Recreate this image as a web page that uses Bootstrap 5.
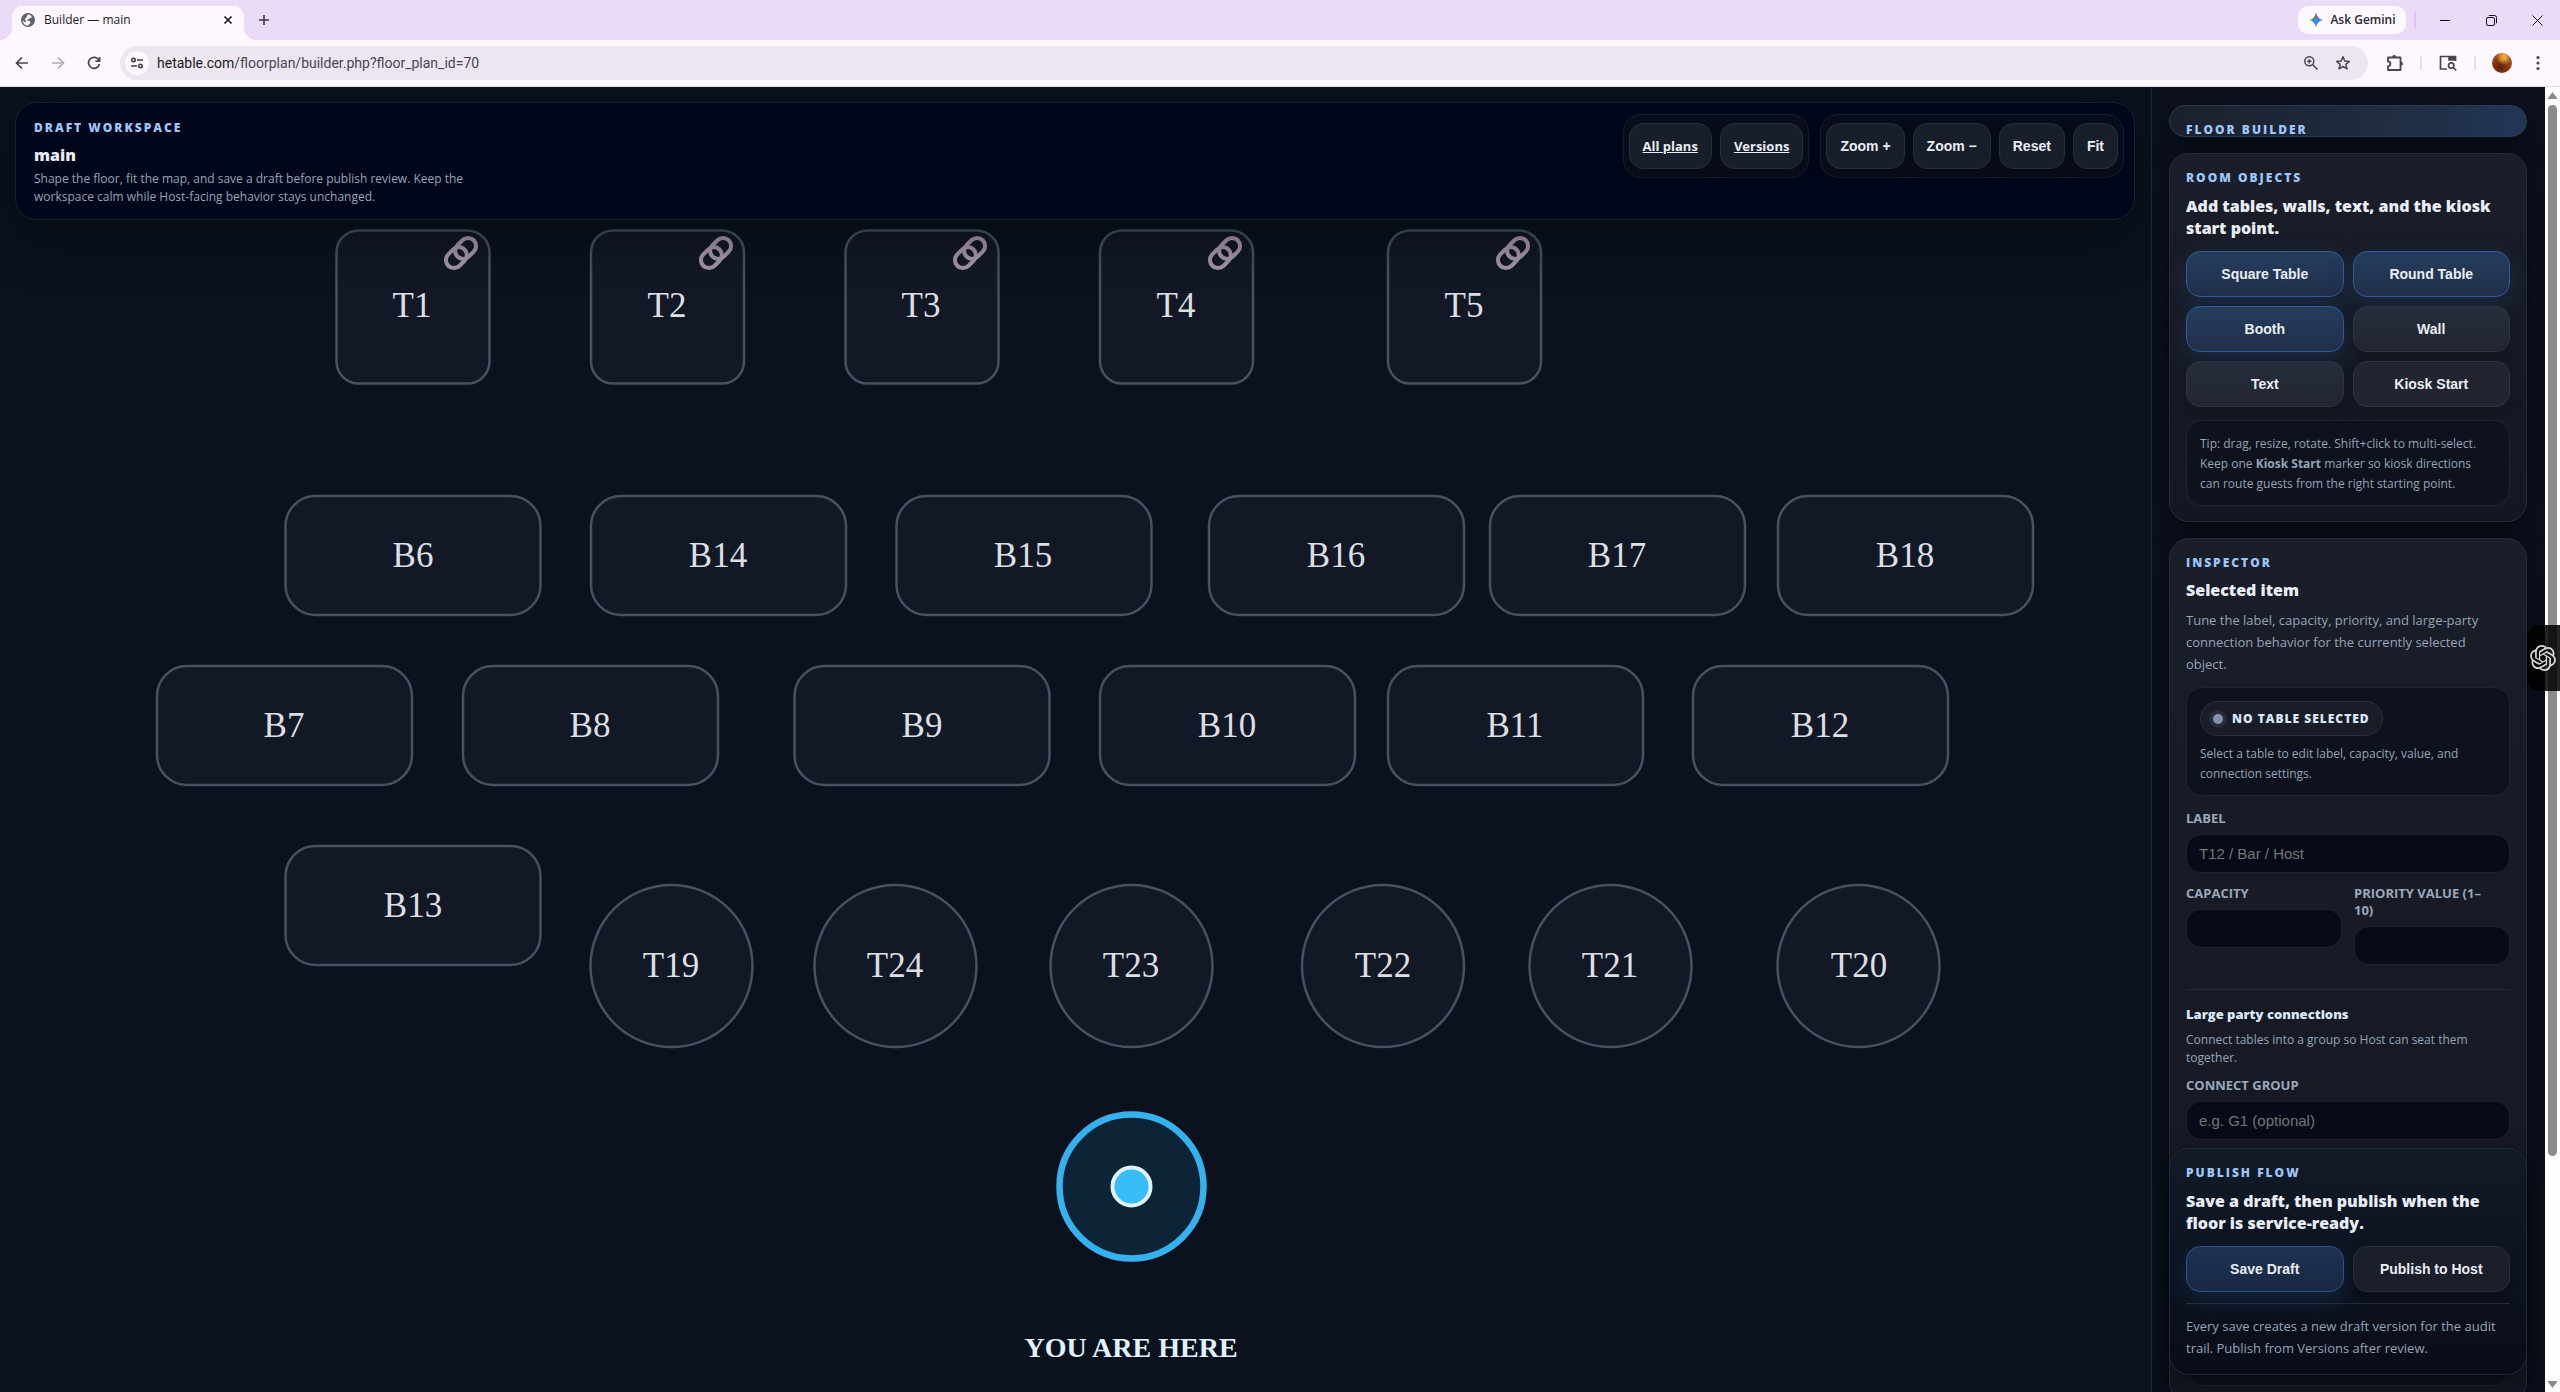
<!DOCTYPE html>
<html lang="en" data-bs-theme="dark">
<head>
<meta charset="utf-8">
<meta name="viewport" content="width=device-width, initial-scale=1">
<title>Builder — main</title>
<link href="https://cdn.jsdelivr.net/npm/bootstrap@5.3.0/dist/css/bootstrap.min.css" rel="stylesheet">
<style>
:root{--ui:"Open Sans","Noto Sans",sans-serif;--ctl:"Liberation Sans",Arial,sans-serif;--line:#252b38}
body{font-family:var(--ui);font-size:13px;background:#0b121e;color:#96a4b8;overflow:hidden}
a{color:inherit}
button{font:inherit}

/* browser frame */
.chrome-tabs{background:#eadcf7;height:40px;color:#1f1b24}
.chrome-tab{width:232px;height:34px;margin-left:12px;padding:0 10px 6px 8px;background:#fdf7ff;border-radius:10px 10px 0 0;position:relative;font:12px/28px var(--ui)}
.chrome-tab::before,.chrome-tab::after{content:"";position:absolute;bottom:0;width:12px;height:12px}
.chrome-tab::before{left:-12px;background:radial-gradient(circle at 0 0,transparent 12px,#fdf7ff 12px)}
.chrome-tab::after{right:-12px;background:radial-gradient(circle at 100% 0,transparent 12px,#fdf7ff 12px)}
.flat-btn{border:0;background:none;padding:0;color:inherit;display:flex;align-items:center;justify-content:center}
.gemini{background:#fdf7ff;border-radius:10px;width:108px;height:28px;font:600 12px/28px var(--ui);color:#2b2730;gap:6px}
.win-btn{width:46px;height:40px}
.v-rule{width:2px;height:16px;background:#d9c3f7;border-radius:1px}
.v-rule-pale{background:#eadcf7}
.chrome-bar{height:47px;background:#fdf7ff;border-bottom:1px solid #e4dae9;color:#4a4450;padding-left:4px}
.nav-btn{width:36px;height:34px}
.address{height:34px;border-radius:17px;background:#ede6f0;padding:0 15px 0 5px;margin-left:8px}
.site-info{width:24px;height:24px;border-radius:50%;background:#fdf7ff}
.url{background:none;border:0;padding:0;outline:0;font:14px/20px Roboto,sans-serif;color:#4a4450}
.url b{font-weight:400;color:#1c1a20}
.avatar{width:20px;height:20px;border-radius:50%;background:radial-gradient(circle at 60% 20%,#f0a13c 0 10%,transparent 40%),radial-gradient(circle at 40% 70%,#5c1f0c,#9c4718 60%,#6d3a20)}

/* workspace */
.stage{background:#0b121e}
.stage svg{display:block;width:100%;height:auto}
.stage-head{position:absolute;top:15px;left:15px;right:16px;height:118px;padding:11px 10px 11px 18px;background:#02061a;border:1px solid #191f2f;border-radius:22px;box-shadow:0 18px 50px rgba(0,0,0,.4)}
.kicker{font-size:12px;line-height:16px;font-weight:800;letter-spacing:2px;text-transform:uppercase;color:#9cc6f7;margin:0}
.headline{font-size:16px;line-height:22px;font-weight:800;color:#e9edf5;margin:0}
.tool-group{border:1px solid #191e2d;background:#090d1b;border-radius:18px;padding:8px 5px;gap:8px}
.tool{height:46px;padding:0 13px;border:1px solid #262c39;border-radius:14px;background:#191e2b;color:#e9edf5;font-size:14px;line-height:20px;font-weight:700;display:flex;align-items:center;justify-content:center;box-shadow:0 8px 16px rgba(0,0,0,.2)}
button.tool{font-family:var(--ctl)}
a.tool{font-size:13px}
.shape{fill:#121826;stroke:#465161;stroke-width:2.5}
.seat{font:35px "Liberation Serif",serif;fill:#dcdfe4;text-anchor:middle}
.here{font:bold 28px "Liberation Serif",serif;fill:#e0f2fe;text-anchor:middle}

/* side panel */
.side{flex:0 0 394px;border-left:1px solid #212735;background:#0b101c;padding:18px 18px 0 17px;gap:16px;overflow:hidden}
.panel{border:1px solid var(--line);border-radius:20px;padding:16px 16px 15px;background:linear-gradient(#1a1e29,#141722);box-shadow:0 10px 26px rgba(0,0,0,.42)}
.panel-hero{height:32px;flex:none;padding:18px 16px 0;border-color:#2a3a54;border-radius:16px;background:linear-gradient(100deg,#1b202b,#1f2a3c 50%,#223655)}
.panel-hero .kicker{line-height:12px}
.panel-last{margin-bottom:-10px;min-height:0}
.panel-publish{position:absolute;left:17px;right:18px;bottom:17px;border-color:#20293a;background:linear-gradient(#121a28,#090d18)}
.pair{display:grid;grid-template-columns:1fr 1fr;gap:9px}
.pair .tool{background:#22252f;border-color:#2f3440}
.pair .tool-blue{background:linear-gradient(#253d5d,#202f4a);border-color:#2f5b97;box-shadow:0 8px 24px rgba(40,100,170,.22)}
.pair .tool-lit{background:linear-gradient(#252e3d,#22252f)}
.panel-publish .tool{background:#1b1f2a;border-color:#292e3a}
.panel-publish .tool-blue{background:linear-gradient(#1c3250,#192844);border-color:#2a5590}
.inset{border:1px solid #1f2430;border-radius:16px;background:#0e121d;padding:13px 13px 11px}
.note{font-size:12px;line-height:20px;margin:0}
.copy{font-size:13px;line-height:22px;margin:0}
.fine{font-size:12px;line-height:18px;margin:0}
.pill{height:35px;padding:0 12px 0 8px;gap:5px;border:1px solid #2a2f3b;border-radius:18px;background:#191d28;font-size:12px;font-weight:800;letter-spacing:1px;color:#dbe7f8;width:max-content}
.dot{width:18px;height:18px;border-radius:50%;border:4px solid #272c38;background:#8491a8}
.field-name{display:block;font-size:13px;line-height:17px;font-weight:700;text-transform:uppercase;color:#9aa8bb;margin:0 0 7px}
.field{display:block;width:100%;height:39px;border:1px solid #1c2230;border-radius:15px;background:#070b18;padding:0 12px;font:15px/20px var(--ctl);color:#e9edf5;outline:0}
.field::placeholder{color:#757575;opacity:1}
.cut{border:0;border-top:1px solid #272c38;opacity:1;margin:0}

.scroller{flex:0 0 15px;background:#fdfdfd;padding:5px 3px 4px}
.thumb{width:9px;flex:0 1 1051px;margin-top:6px;border-radius:5px;background:#8b8b8b}
.gpt-tab{position:absolute;right:0;top:538px;width:33px;height:66px;border:0;border-radius:12px 0 0 12px;background:rgba(0,0,0,.86);padding:0 0 0 3px;color:#d9d9d9}
</style>
</head>
<body class="d-flex flex-column vh-100">

<header class="flex-shrink-0">
  <div class="chrome-tabs d-flex align-items-center">
    <div class="chrome-tab d-flex align-items-center align-self-end">
      <svg width="16" height="16" viewBox="0 0 16 16" class="me-2 flex-shrink-0"><circle cx="8" cy="8" r="7" fill="#5f6368"/><path fill="#fdf7ff" d="M8 2.500c2 .2 3.200 1 4 2.300-.6 1.200-1.600 1.200-2.300 1.200-.2 1.400-1.400 1.500-2.600 1.400.1 1 .3 1.300 1.300 1.300 1.600 0 2.100.8 2 2-.1 1.300-1.600 1-1.900 2.800-3.300.3-5.700-2-6-5 1 .8 1.800 1.500 3 1.500 1 0 1-.7.300-1.200C4.600 7.900 4.500 6.500 5.800 6c1.200-.5.200-1.300 1-2.100.4-.4 1-.6 1.200-1.400z"/></svg>
      <span class="flex-grow-1">Builder — main</span>
      <button class="flat-btn" aria-label="Close tab"><svg width="12" height="12" viewBox="0 0 12 12" stroke="#1f1b24" stroke-width="1.700"><path d="M2.500 2.500l7 7M9.500 2.500l-7 7"/></svg></button>
    </div>
    <button class="flat-btn ms-2" style="width:24px" aria-label="New tab"><svg width="12" height="12" viewBox="0 0 12 12" stroke="#3f3a46" stroke-width="1.600"><path d="M6 1v10M1 6h10"/></svg></button>
    <div class="ms-auto d-flex align-items-center">
      <button class="flat-btn gemini"><svg width="16" height="16" viewBox="0 0 16 16"><defs><linearGradient id="gem" x1="0" y1=".3" x2="1" y2=".6"><stop offset="0" stop-color="#f5b915"/><stop offset=".3" stop-color="#34a853"/><stop offset=".5" stop-color="#3186ff"/><stop offset="1" stop-color="#3b7df5"/></linearGradient></defs><path fill="url(#gem)" d="M8 .5C8.600 4.700 11.300 7.400 15.500 8 11.300 8.600 8.600 11.300 8 15.500 7.400 11.300 4.700 8.600.5 8 4.700 7.400 7.400 4.700 8 .5z"/><path fill="#ea4335" d="M8 .5C8.300 3 9.400 5 11 6.200L6.500 5.200C7.400 4 7.800 2.500 8 .5z"/></svg>Ask Gemini</button>
      <span class="v-rule ms-2"></span>
      <button class="flat-btn win-btn" style="margin-left:6px" aria-label="Minimize"><svg width="10" height="10" stroke="#111"><path d="M0 5.500h10"/></svg></button>
      <button class="flat-btn win-btn" aria-label="Restore"><svg width="11" height="11" viewBox="0 0 11 11" fill="none" stroke="#111"><rect x=".5" y="2.500" width="8" height="8" rx="1.500"/><path d="M2.800.5H8.500a2 2 0 0 1 2 2V8.300"/></svg></button>
      <button class="flat-btn win-btn" aria-label="Close"><svg width="11" height="11" viewBox="0 0 11 11" stroke="#111"><path d="M.5.5l10 10M10.500.5l-10 10"/></svg></button>
    </div>
  </div>
  <div class="chrome-bar d-flex align-items-center">
    <button class="flat-btn nav-btn" aria-label="Back"><svg width="16" height="16" viewBox="0 0 16 16" fill="none" stroke="#4a4450" stroke-width="1.700"><path d="M14 8H3M8 2.500L2.500 8 8 13.500"/></svg></button>
    <button class="flat-btn nav-btn" aria-label="Forward"><svg width="16" height="16" viewBox="0 0 16 16" fill="none" stroke="#b2acb8" stroke-width="1.700"><path d="M2 8h11M8 2.500L13.500 8 8 13.500"/></svg></button>
    <button class="flat-btn nav-btn" aria-label="Reload"><svg width="16" height="16" viewBox="0 0 16 16" fill="none" stroke="#4a4450" stroke-width="1.700"><path d="M13 5.500A5.500 5.500 0 1 0 13.400 9M13.600 2v4.200H9.400"/></svg></button>
    <div class="address d-flex align-items-center flex-grow-1">
      <button class="flat-btn site-info" aria-label="Site information"><svg width="14" height="14" viewBox="0 0 14 14" fill="none" stroke="#3f3a46" stroke-width="1.600"><circle cx="3.500" cy="4" r="1.700"/><path d="M7 4h6M1 10h6"/><circle cx="10.500" cy="10" r="1.700"/></svg></button>
      <a class="url ms-2 flex-grow-1 text-decoration-none" href="#"><b>hetable.com</b>/floorplan/builder.php?floor_plan_id=70</a>
      <button class="flat-btn" style="width:32px" aria-label="Zoom level"><svg width="16" height="16" viewBox="0 0 16 16" fill="none" stroke="#4a4450" stroke-width="1.500"><circle cx="6.300" cy="6.300" r="4.500"/><path d="M9.700 9.700l4.800 4.800M6.300 4.200v4.200M4.200 6.300h4.200"/></svg></button>
      <button class="flat-btn" style="width:32px;margin-right:-6px" aria-label="Bookmark"><svg width="16" height="16" viewBox="0 0 16 16" fill="none" stroke="#4a4450" stroke-width="1.500" stroke-linejoin="round"><path d="M8 1.800l1.800 4.200 4.600.4-3.500 3 1.100 4.500L8 11.500l-4 2.400 1.100-4.500-3.500-3 4.600-.4z"/></svg></button>
    </div>
    <button class="flat-btn ms-3" style="width:22px" aria-label="Extensions"><svg width="18" height="18" viewBox="0 0 18 18" fill="none" stroke="#4a4450" stroke-width="1.800" stroke-linejoin="round"><path d="M2 3.500h12.500v12.500H2v-3.800a2.400 2.400 0 0 0 0-4.800z"/><path fill="#4a4450" stroke="none" d="M6.200 3a2 2 0 0 1 4 0zM15 7.700a2 2 0 0 1 0 4z"/></svg></button>
    <span class="v-rule v-rule-pale" style="margin-left:14px"></span>
    <button class="flat-btn" style="width:52px" aria-label="Search side panel"><svg width="18" height="18" viewBox="0 0 18 18" fill="none" stroke="#4a4450" stroke-width="1.700"><path d="M8 15H1.500V2.500h15V7"/><path fill="#4a4450" d="M10 3h6v3h-6z"/><circle cx="12.200" cy="11.500" r="2.700"/><path d="M14.200 13.500l3 3"/></svg></button>
    <span class="v-rule v-rule-pale"></span>
    <button class="flat-btn ms-3 me-1" aria-label="Profile"><span class="avatar"></span></button>
    <button class="flat-btn" style="width:44px" aria-label="Menu"><svg width="4" height="16" fill="#4a4450"><circle cx="2" cy="2.500" r="1.600"/><circle cx="2" cy="8" r="1.600"/><circle cx="2" cy="13.500" r="1.600"/></svg></button>
  </div>
</header>

<main class="d-flex flex-grow-1 position-relative overflow-hidden">
  <section class="stage flex-grow-1 position-relative overflow-hidden">
    <svg viewBox="0 0 2151 1305" role="img" aria-label="Floor plan">
      <defs>
        <g id="chain" fill="none" stroke="#a496a6" stroke-width="4"><g transform="rotate(-45)"><rect x="-5" y="-8" width="23" height="16" rx="8"/><rect x="-18" y="-8" width="23" height="16" rx="8"/></g></g>
      </defs>
      <g class="shape">
        <rect x="336.500" y="143.500" width="153" height="153" rx="22"/><rect x="591" y="143.500" width="153" height="153" rx="22"/><rect x="845.500" y="143.500" width="153" height="153" rx="22"/><rect x="1100" y="143.500" width="153" height="153" rx="22"/><rect x="1388" y="143.500" width="153" height="153" rx="22"/>
        <rect x="285.500" y="409" width="255" height="119" rx="30"/><rect x="591" y="409" width="255" height="119" rx="30"/><rect x="896.500" y="409" width="255" height="119" rx="30"/><rect x="1209" y="409" width="255" height="119" rx="30"/><rect x="1490" y="409" width="255" height="119" rx="30"/><rect x="1778" y="409" width="255" height="119" rx="30"/>
        <rect x="157" y="579" width="255" height="119" rx="30"/><rect x="463" y="579" width="255" height="119" rx="30"/><rect x="794.500" y="579" width="255" height="119" rx="30"/><rect x="1100" y="579" width="255" height="119" rx="30"/><rect x="1388" y="579" width="255" height="119" rx="30"/><rect x="1693" y="579" width="255" height="119" rx="30"/>
        <rect x="285.500" y="759" width="255" height="119" rx="30"/>
        <circle cx="671.500" cy="879" r="81"/><circle cx="895.500" cy="879" r="81"/><circle cx="1131.500" cy="879" r="81"/><circle cx="1383" cy="879" r="81"/><circle cx="1610.500" cy="879" r="81"/><circle cx="1858.500" cy="879" r="81"/>
      </g>
      <g>
        <use href="#chain" x="461" y="166"/><use href="#chain" x="716" y="166"/><use href="#chain" x="970" y="166"/><use href="#chain" x="1225" y="166"/><use href="#chain" x="1513" y="166"/>
      </g>
      <g class="seat">
        <text x="412" y="230">T1</text><text x="667" y="230">T2</text><text x="921" y="230">T3</text><text x="1176" y="230">T4</text><text x="1464" y="230">T5</text>
        <text x="413" y="480">B6</text><text x="718" y="480">B14</text><text x="1023" y="480">B15</text><text x="1336" y="480">B16</text><text x="1617" y="480">B17</text><text x="1905" y="480">B18</text>
        <text x="284" y="650">B7</text><text x="590" y="650">B8</text><text x="922" y="650">B9</text><text x="1227" y="650">B10</text><text x="1515" y="650">B11</text><text x="1820" y="650">B12</text>
        <text x="413" y="830">B13</text>
        <text x="671" y="890">T19</text><text x="895" y="890">T24</text><text x="1131" y="890">T23</text><text x="1383" y="890">T22</text><text x="1610" y="890">T21</text><text x="1859" y="890">T20</text>
      </g>
      <circle cx="1131.500" cy="1099.500" r="72" fill="#0c2436" stroke="#35b2ee" stroke-width="6.500"/>
      <circle cx="1131.500" cy="1099.500" r="19" fill="#38bdf8" stroke="#e0f2fe" stroke-width="4"/>
      <text class="here" x="1131" y="1270">YOU ARE HERE</text>
    </svg>

    <div class="stage-head d-flex justify-content-between align-items-start">
      <div style="padding-top:6px">
        <p class="kicker">Draft workspace</p>
        <h1 class="headline mt-2 mb-1">main</h1>
        <p class="fine">Shape the floor, fit the map, and save a draft before publish review. Keep the<br>workspace calm while Host-facing behavior stays unchanged.</p>
      </div>
      <div class="d-flex" style="gap:11px">
        <nav class="tool-group d-flex"><a class="tool" href="#">All plans</a><a class="tool" href="#">Versions</a></nav>
        <div class="tool-group d-flex"><button class="tool">Zoom +</button><button class="tool">Zoom −</button><button class="tool">Reset</button><button class="tool">Fit</button></div>
      </div>
    </div>
  </section>

  <aside class="side position-relative d-flex flex-column">
    <section class="panel panel-hero"><p class="kicker">Floor builder</p></section>

    <section class="panel">
      <p class="kicker">Room objects</p>
      <h2 class="headline" style="margin:9px 0 12px">Add tables, walls, text, and the kiosk start point.</h2>
      <div class="pair">
        <button class="tool tool-blue">Square Table</button><button class="tool tool-blue">Round Table</button>
        <button class="tool tool-blue">Booth</button><button class="tool tool-lit">Wall</button>
        <button class="tool tool-lit">Text</button><button class="tool">Kiosk Start</button>
      </div>
      <div class="inset" style="margin-top:13px"><p class="note">Tip: drag, resize, rotate. Shift+click to multi-select.<br>Keep one <strong>Kiosk Start</strong> marker so kiosk directions<br>can route guests from the right starting point.</p></div>
    </section>

    <section class="panel panel-last flex-grow-1 d-flex flex-column">
      <p class="kicker">Inspector</p>
      <h2 class="headline" style="margin:8px 0">Selected item</h2>
      <p class="copy">Tune the label, capacity, priority, and large-party connection behavior for the currently selected<br>object.</p>
      <div class="inset" style="margin:12px 0 14px">
        <div class="pill d-flex align-items-center"><span class="dot"></span>NO TABLE SELECTED</div>
        <p class="note mt-2">Select a table to edit label, capacity, value, and connection settings.</p>
      </div>
      <label class="field-name" for="f-label">Label</label>
      <input class="field" id="f-label" placeholder="T12 / Bar / Host">
      <div class="pair" style="gap:12px;margin:12px 0 24px">
        <div><label class="field-name" for="f-cap">Capacity</label><input class="field" id="f-cap"></div>
        <div><label class="field-name" for="f-pri">Priority value (1–<br>10)</label><input class="field" id="f-pri"></div>
      </div>
      <hr class="cut">
      <h3 class="mb-0" style="font-size:13px;line-height:20px;font-weight:800;color:#dbe7f8;margin-top:14px">Large party connections</h3>
      <p class="fine" style="margin:7px 0 10px">Connect tables into a group so Host can seat them together.</p>
      <label class="field-name" for="f-grp">Connect group</label>
      <input class="field flex-shrink-0" id="f-grp" placeholder="e.g. G1 (optional)">
      <div class="inset flex-grow-1 mt-4"></div>
    </section>

    <section class="panel panel-publish">
      <p class="kicker">Publish flow</p>
      <h2 class="headline" style="margin:9px 0 12px">Save a draft, then publish when the floor is service-ready.</h2>
      <div class="pair"><button class="tool tool-blue">Save Draft</button><button class="tool">Publish to Host</button></div>
      <hr class="cut" style="margin:11px 0">
      <p class="copy">Every save creates a new draft version for the audit trail. Publish from Versions after review.</p>
    </section>
  </aside>

  <div class="scroller d-flex flex-column align-items-center" aria-hidden="true">
    <svg width="9" height="7" class="flex-shrink-0"><path fill="#8b8b8b" d="M4.500 0L9 6v1H0V6z"/></svg>
    <div class="thumb"></div>
    <svg width="9" height="7" class="flex-shrink-0 mt-auto"><path fill="#8b8b8b" d="M4.500 7L9 1V0H0v1z"/></svg>
  </div>

  <button class="gpt-tab d-flex align-items-center" aria-label="ChatGPT"><svg width="26" height="26" viewBox="0 0 24 24" fill="currentColor"><path d="M22.2819 9.8211a5.9847 5.9847 0 0 0-.5157-4.9108 6.0462 6.0462 0 0 0-6.5098-2.9A6.0651 6.0651 0 0 0 4.9807 4.1818a5.9847 5.9847 0 0 0-3.9977 2.9 6.0462 6.0462 0 0 0 .7427 7.0966 5.98 5.98 0 0 0 .511 4.9107 6.051 6.051 0 0 0 6.5146 2.9001A5.9847 5.9847 0 0 0 13.2599 24a6.0557 6.0557 0 0 0 5.7718-4.2058 5.9894 5.9894 0 0 0 3.9977-2.9001 6.0557 6.0557 0 0 0-.7475-7.0729zm-9.022 12.6081a4.4755 4.4755 0 0 1-2.8764-1.0408l.1419-.0804 4.7783-2.7582a.7948.7948 0 0 0 .3927-.6813v-6.7369l2.02 1.1686a.071.071 0 0 1 .038.052v5.5826a4.504 4.504 0 0 1-4.4945 4.4944zm-9.6607-4.1254a4.4708 4.4708 0 0 1-.5346-3.0137l.142.0852 4.783 2.7582a.7712.7712 0 0 0 .7806 0l5.8428-3.3685v2.3324a.0804.0804 0 0 1-.0332.0615L9.74 19.9502a4.4992 4.4992 0 0 1-6.1408-1.6464zM2.3408 7.8956a4.485 4.485 0 0 1 2.3655-1.9728V11.6a.7664.7664 0 0 0 .3879.6765l5.8144 3.3543-2.0201 1.1685a.0757.0757 0 0 1-.071 0l-4.8303-2.7865A4.504 4.504 0 0 1 2.3408 7.872zm16.5963 3.8558L13.1038 8.364 15.1192 7.2a.0757.0757 0 0 1 .071 0l4.8303 2.7913a4.4944 4.4944 0 0 1-.6765 8.1042v-5.6772a.79.79 0 0 0-.407-.667zm2.0107-3.0231l-.142-.0852-4.7735-2.7818a.7759.7759 0 0 0-.7854 0L9.409 9.2297V6.8974a.0662.0662 0 0 1 .0284-.0615l4.8303-2.7866a4.4992 4.4992 0 0 1 6.6802 4.66zM8.3065 12.863l-2.02-1.1638a.0804.0804 0 0 1-.038-.0567V6.0742a4.4992 4.4992 0 0 1 7.3757-3.4537l-.142.0805L8.704 5.459a.7948.7948 0 0 0-.3927.6813zm1.0976-2.3654l2.602-1.4998 2.6069 1.4998v2.9994l-2.5974 1.4997-2.6067-1.4997Z"/></svg></button>
</main>

<script src="https://cdn.jsdelivr.net/npm/bootstrap@5.3.0/dist/js/bootstrap.bundle.min.js"></script>
</body>
</html>
